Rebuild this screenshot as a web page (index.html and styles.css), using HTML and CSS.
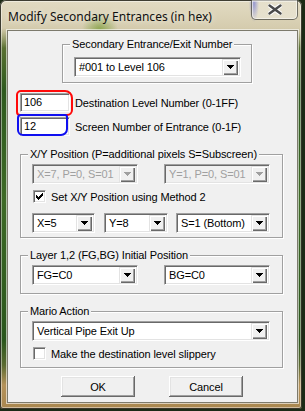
FILE: index.html
```html
<!DOCTYPE html>
<html lang="en">
<head>
  <meta charset="UTF-8">
  <title>Modify Secondary Entrances (in hex)</title>
  <link rel="stylesheet" href="styles.css">
</head>
<body>
  <div class="window">
    <div class="titlebar">
      <span class="title">Modify Secondary Entrances (in hex)</span>
      <div class="close">
        <svg width="14" height="11" viewBox="0 0 14 11">
          <path d="M1.5 1.5l11 8M12.5 1.5l-11 8" stroke="#fff" stroke-width="4.6" stroke-linecap="round"/>
          <path d="M1.5 1.5l11 8M12.5 1.5l-11 8" stroke="#4a4a4a" stroke-width="2.4" stroke-linecap="round"/>
        </svg>
      </div>
    </div>

    <div class="client">
      <!-- Exit number -->
      <div class="group group-exit">
        <span class="group-title">Secondary Entrance/Exit Number</span>
        <div class="combo combo-exit">
          <span class="combo-text">#001 to Level 106</span>
          <span class="drop"><svg width="7" height="4"><path d="M0 0h7v1h-1v1h-1v1h-1v1h-1v-1h-1v-1h-1v-1h-1z"/></svg></span>
        </div>
      </div>

      <div class="field-row row-level">
        <div class="edit">106</div>
        <span class="label">Destination Level Number (0-1FF)</span>
        <span class="mark mark-red"></span>
      </div>
      <div class="field-row row-screen">
        <div class="edit">12</div>
        <span class="label">Screen Number of Entrance (0-1F)</span>
        <span class="mark mark-blue"></span>
      </div>

      <!-- X/Y position -->
      <div class="group group-xy">
        <span class="group-title">X/Y Position (P=additional pixels S=Subscreen)</span>
        <div class="combo-row">
          <div class="combo combo-half disabled">
            <span class="combo-text">X=7, P=0, S=01</span>
            <span class="drop"><svg width="7" height="4"><path d="M0 0h7v1h-1v1h-1v1h-1v1h-1v-1h-1v-1h-1v-1h-1z"/></svg></span>
          </div>
          <div class="combo combo-half disabled">
            <span class="combo-text">Y=1, P=0, S=01</span>
            <span class="drop"><svg width="7" height="4"><path d="M0 0h7v1h-1v1h-1v1h-1v1h-1v-1h-1v-1h-1v-1h-1z"/></svg></span>
          </div>
        </div>
        <div class="check-row">
          <span class="checkbox"><svg width="7" height="7"><path d="M0 2h1v1h1v1h1v-1h1v-1h1v-1h1v-1h1v3h-1v1h-1v1h-1v1h-1v1h-1v-1h-1v-1h-1v-1h-1z"/></svg></span>
          <span class="label">Set X/Y Position using Method 2</span>
        </div>
        <div class="combo-row combo-row-three">
          <div class="combo combo-x">
            <span class="combo-text">X=5</span>
            <span class="drop"><svg width="7" height="4"><path d="M0 0h7v1h-1v1h-1v1h-1v1h-1v-1h-1v-1h-1v-1h-1z"/></svg></span>
          </div>
          <div class="combo combo-y">
            <span class="combo-text">Y=8</span>
            <span class="drop"><svg width="7" height="4"><path d="M0 0h7v1h-1v1h-1v1h-1v1h-1v-1h-1v-1h-1v-1h-1z"/></svg></span>
          </div>
          <div class="combo combo-s">
            <span class="combo-text">S=1 (Bottom)</span>
            <span class="drop"><svg width="7" height="4"><path d="M0 0h7v1h-1v1h-1v1h-1v1h-1v-1h-1v-1h-1v-1h-1z"/></svg></span>
          </div>
        </div>
      </div>

      <!-- Layer position -->
      <div class="group group-layer">
        <span class="group-title">Layer 1,2 (FG,BG) Initial Position</span>
        <div class="combo-row">
          <div class="combo combo-half">
            <span class="combo-text">FG=C0</span>
            <span class="drop"><svg width="7" height="4"><path d="M0 0h7v1h-1v1h-1v1h-1v1h-1v-1h-1v-1h-1v-1h-1z"/></svg></span>
          </div>
          <div class="combo combo-half">
            <span class="combo-text">BG=C0</span>
            <span class="drop"><svg width="7" height="4"><path d="M0 0h7v1h-1v1h-1v1h-1v1h-1v-1h-1v-1h-1v-1h-1z"/></svg></span>
          </div>
        </div>
      </div>

      <!-- Mario action -->
      <div class="group group-mario">
        <span class="group-title">Mario Action</span>
        <div class="combo combo-full">
          <span class="combo-text">Vertical Pipe Exit Up</span>
          <span class="drop"><svg width="7" height="4"><path d="M0 0h7v1h-1v1h-1v1h-1v1h-1v-1h-1v-1h-1v-1h-1z"/></svg></span>
        </div>
        <div class="check-row">
          <span class="checkbox"></span>
          <span class="label">Make the destination level slippery</span>
        </div>
      </div>

      <div class="buttons">
        <button class="btn">OK</button>
        <button class="btn">Cancel</button>
      </div>
    </div>
  </div>
</body>
</html>
```

FILE: styles.css
```css
/* Page & window frame */
body {
  margin: 0;
  width: 305px;
  height: 411px;
  overflow: hidden;
  background: #1c2a16;
  font-family: "Liberation Sans", Arial, sans-serif;
  font-size: 11px;
  letter-spacing: -0.1px;
  color: #000;
}

.window {
  width: 302px;
  height: 409px;
  display: flex;
  flex-direction: column;
  border-radius: 6px 6px 3px 3px;
  background:
    radial-gradient(circle at 100px 30px, rgba(110, 150, 40, 0.7) 0, rgba(110, 150, 40, 0) 18px),
    radial-gradient(ellipse 5px 18px at 254px 4px, rgba(50, 60, 200, 0.55) 0, rgba(50, 60, 200, 0) 100%),
    linear-gradient(to bottom, #e2dbc3 0, #d5ccae 28px, rgba(213, 204, 174, 0) 48px),
    linear-gradient(to bottom, #6c7a3a 30px, #2e5a1e 90px, #3e6a26 200px, #2a561c 340px, #5a6a30 365px, #b4925a 385px, #a9874f 100%);
  box-shadow: inset 0 0 0 1px rgba(30, 30, 20, 0.85), inset 0 0 0 2px rgba(255, 255, 255, 0.45);
}

.titlebar {
  height: 30px;
  display: flex;
  align-items: flex-start;
  padding-left: 8px;
}

.title {
  margin-top: 8px;
  font-family: "Noto Sans", "Open Sans", sans-serif;
  font-size: 12px;
  letter-spacing: 0;
  color: #101010;
  text-shadow: 0 0 6px rgba(255, 255, 255, 0.9);
}

.close {
  margin-left: auto;
  margin-right: 4px;
  width: 47px;
  height: 20px;
  box-sizing: border-box;
  display: flex;
  align-items: center;
  justify-content: center;
  border: 1px solid rgba(70, 70, 60, 0.75);
  border-top: none;
  border-radius: 0 0 5px 5px;
  background: linear-gradient(to bottom, rgba(255, 255, 255, 0.15), rgba(255, 255, 255, 0.35));
  box-shadow: inset 0 0 0 1px rgba(255, 255, 255, 0.5);
}

/* Client area */
.client {
  margin-left: 7px;
  width: 291px;
  height: 373px;
  box-sizing: border-box;
  border: 1px solid #7c7a6c;
  background: #f0f0f0;
  box-shadow: 0 0 0 1px rgba(255, 255, 255, 0.6);
  display: flex;
  flex-direction: column;
  align-items: flex-start;
}

/* Group boxes */
.group {
  position: relative;
  box-sizing: border-box;
  border: 1px solid #a0a0a0;
  box-shadow: inset 1px 1px #fff, 1px 1px #fff;
}

.group-title {
  position: absolute;
  top: -7px;
  left: 7px;
  padding: 0 2px;
  line-height: 13px;
  background: #f0f0f0;
  white-space: nowrap;
}

.group-exit {
  margin: 13px 0 0 54px;
  width: 190px;
  height: 39px;
  padding: 12px 0 0 11px;
}

.group-xy {
  margin: 18px 0 0 12px;
  width: 263px;
  height: 84px;
  padding: 9px 0 0 11px;
}

.group-layer {
  margin: 17px 0 0 12px;
  width: 263px;
  height: 39px;
  padding: 9px 0 0 11px;
}

.group-mario {
  margin: 17px 0 0 12px;
  width: 263px;
  height: 57px;
  padding: 9px 0 0 11px;
}

/* Sunken fields */
.edit,
.combo,
.checkbox {
  box-sizing: border-box;
  background: #fff;
  border-top: 1px solid #a0a0a0;
  border-left: 1px solid #a0a0a0;
  border-right: 1px solid #fff;
  border-bottom: 1px solid #fff;
  box-shadow: inset 1px 1px #696969, inset -1px -1px #e3e3e3;
}

.combo {
  height: 20px;
  display: flex;
  align-items: center;
  padding: 2px;
}

.combo-text {
  flex: 1;
  padding-left: 2px;
  white-space: nowrap;
  overflow: hidden;
}

.drop {
  width: 16px;
  height: 16px;
  box-sizing: border-box;
  display: flex;
  align-items: center;
  justify-content: center;
  background: #f0f0f0;
  box-shadow: inset 1px 1px #e3e3e3, inset 2px 2px #fff, inset -1px -1px #696969, inset -2px -2px #a0a0a0;
}

.drop svg {
  fill: #000;
}

.combo.disabled {
  background: #f0f0f0;
  color: #a0a0a0;
}

.combo.disabled .drop svg {
  fill: #a0a0a0;
}

.combo-exit { width: 167px; }
.combo-half { width: 106px; }
.combo-full { width: 238px; }
.combo-x { width: 63px; }
.combo-y { width: 64px; }
.combo-s { width: 94px; }

.combo-row {
  display: flex;
  gap: 26px;
}

.combo-row-three {
  gap: 9px;
  margin-top: 10px;
}

.combo-row-three .combo-s {
  margin-left: -1px;
}

/* Checkboxes */
.check-row {
  display: flex;
  align-items: center;
  gap: 5px;
  margin: 6px 0 0 1px;
  height: 13px;
}

.checkbox {
  width: 13px;
  height: 13px;
  display: flex;
  align-items: center;
  justify-content: center;
}

.checkbox svg {
  fill: #000;
}

/* Edit rows */
.field-row {
  position: relative;
  display: flex;
  align-items: center;
  gap: 5px;
  margin-left: 12px;
}

.row-level { margin-top: 10px; }
.row-screen { margin-top: 5px; }

.edit {
  width: 50px;
  height: 19px;
  line-height: 17px;
  padding-left: 3px;
}

/* Hand-drawn marks over the edits */
.mark {
  position: absolute;
  box-sizing: border-box;
  border: 2px solid;
  border-radius: 6px;
}

.mark-red {
  left: -4px;
  top: -3px;
  width: 57px;
  height: 26px;
  border-color: #ff0a0a;
  border-radius: 5px 8px 6px 4px;
}

.mark-blue {
  left: -3px;
  top: -3px;
  width: 51px;
  height: 22px;
  border-color: #1010f0;
  border-radius: 4px 3px 7px 6px;
}

/* Buttons */
.buttons {
  display: flex;
  gap: 34px;
  margin: 8px 0 0 53px;
}

.btn {
  width: 74px;
  height: 21px;
  padding: 0;
  font: inherit;
  letter-spacing: inherit;
  color: #000;
  background: #f0f0f0;
  border: none;
  box-shadow: inset -1px -1px #696969, inset 1px 1px #fff, inset -2px -2px #a0a0a0, inset 2px 2px #e3e3e3;
}
```
